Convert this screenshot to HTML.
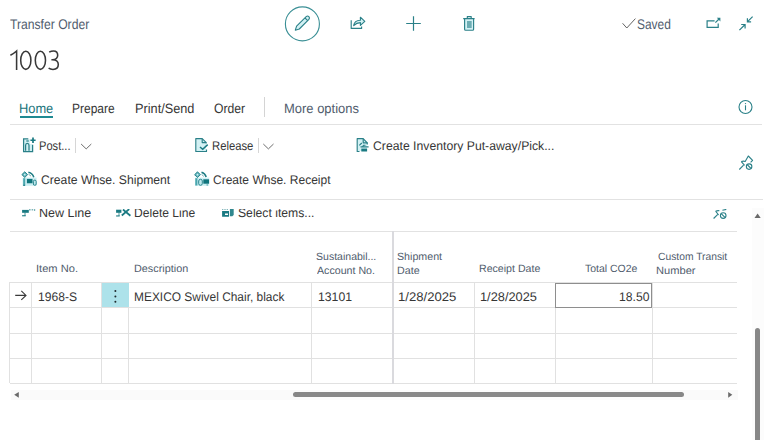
<!DOCTYPE html>
<html><head><meta charset="utf-8">
<style>
*{box-sizing:border-box;margin:0;padding:0}
html,body{width:780px;height:440px;overflow:hidden;background:#fff}
body{font-family:"Liberation Sans",sans-serif;color:#212121;position:relative}
.a{position:absolute;white-space:nowrap;line-height:1;transform-origin:0 0;text-rendering:geometricPrecision}
svg{position:absolute;overflow:visible}
.hl{position:absolute;height:1px;background:#e1e1e1}
.vl{position:absolute;width:1px;background:#e1e1e1}
</style></head><body>

<div class="a" style="left:10.0px;top:17px;font-size:14px;color:#505c6d;transform:scaleX(0.868)">Transfer Order</div>
<div class="a" style="left:636.95px;top:17px;font-size:14px;color:#505c6d;transform:scaleX(0.853)">Saved</div>
<div class="a" style="left:18.75px;top:102px;font-size:13.5px;color:#20747b;transform:scaleX(0.951)">Home</div>
<div class="a" style="left:72.31px;top:102px;font-size:13.5px;color:#363636;transform:scaleX(0.889)">Prepare</div>
<div class="a" style="left:134.56px;top:102px;font-size:13.5px;color:#363636;transform:scaleX(0.943)">Print/Send</div>
<div class="a" style="left:213.5px;top:102px;font-size:13.5px;color:#363636;transform:scaleX(0.903)">Order</div>
<div class="a" style="left:283.64px;top:102px;font-size:13.5px;color:#505c6d;transform:scaleX(0.96)">More options</div>
<div class="a" style="left:39.11px;top:140px;font-size:12.5px;color:#363636;transform:scaleX(0.888)">Post...</div>
<div class="a" style="left:211.5px;top:140px;font-size:12.5px;color:#363636;transform:scaleX(0.902)">Release</div>
<div class="a" style="left:372.9px;top:140px;font-size:12.5px;color:#363636;transform:scaleX(0.978)">Create Inventory Put-away/Pick...</div>
<div class="a" style="left:40.5px;top:174px;font-size:12.5px;color:#363636;transform:scaleX(0.974)">Create Whse. Shipment</div>
<div class="a" style="left:212.7px;top:174px;font-size:12.5px;color:#363636;transform:scaleX(0.961)">Create Whse. Receipt</div>
<div class="a" style="left:35.84px;top:264px;font-size:10.5px;color:#505c6d;transform:scaleX(1.058)">Item No.</div>
<div class="a" style="left:133.57px;top:264px;font-size:10.5px;color:#505c6d;transform:scaleX(1.033)">Description</div>
<div class="a" style="left:316.2px;top:252px;font-size:10.5px;color:#505c6d;transform:scaleX(1.003)">Sustainabil...</div>
<div class="a" style="left:317.2px;top:266px;font-size:10.5px;color:#505c6d;transform:scaleX(1.014)">Account No.</div>
<div class="a" style="left:397.48px;top:252px;font-size:10.5px;color:#505c6d;transform:scaleX(1.016)">Shipment</div>
<div class="a" style="left:397.48px;top:266px;font-size:10.5px;color:#505c6d;transform:scaleX(1.019)">Date</div>
<div class="a" style="left:478.59px;top:264px;font-size:10.5px;color:#505c6d;transform:scaleX(1.01)">Receipt Date</div>
<div class="a" style="left:585.4px;top:264px;font-size:10.5px;color:#505c6d;transform:scaleX(0.998)">Total CO2e</div>
<div class="a" style="left:657.5px;top:252px;font-size:10.5px;color:#505c6d;transform:scaleX(0.98)">Custom Transit</div>
<div class="a" style="left:656.44px;top:266px;font-size:10.5px;color:#505c6d;transform:scaleX(1.058)">Number</div>
<div class="a" style="left:37.53px;top:291px;font-size:12.5px;color:#363636;transform:scaleX(0.967)">1968-S</div>
<div class="a" style="left:134.15px;top:291px;font-size:12.5px;color:#363636;transform:scaleX(0.954)">MEXICO Swivel Chair, black</div>
<div class="a" style="left:317.52px;top:291px;font-size:12.5px;color:#363636;transform:scaleX(0.979)">13101</div>
<div class="a" style="left:398.15px;top:291px;font-size:12.5px;color:#363636;transform:scaleX(1.048)">1/28/2025</div>
<div class="a" style="left:479.98px;top:291px;font-size:12.5px;color:#363636;transform:scaleX(1.024)">1/28/2025</div>
<div class="a" style="left:618.83px;top:291px;font-size:12.5px;color:#363636;transform:scaleX(0.973)">18.50</div>

<!-- title number (light weight) -->
<svg style="left:0;top:0" width="80" height="80">
  <g fill="none" stroke="#383838" stroke-width="1.55" stroke-linecap="butt">
    <path d="M10.4 55.2 Q14 53.4 16.6 51 V70"/>
    <ellipse cx="25.8" cy="60.25" rx="5.1" ry="9.1"/>
    <ellipse cx="40.4" cy="60.25" rx="5.1" ry="9.1"/>
    <path d="M49.2 52.2 Q51.2 50.9 53.6 50.9 Q57.7 50.9 57.7 55.3 Q57.7 59.6 52.4 59.8 H51.4 M52.4 59.8 Q58.3 59.8 58.3 64.6 Q58.3 69.4 53 69.4 Q50.4 69.4 48.6 68.2"/>
  </g>
</svg>

<!-- top toolbar -->
<svg style="left:0;top:0" width="780" height="46">
  <circle cx="302.4" cy="23.9" r="17" fill="none" stroke="#3a8f95" stroke-width="1.1"/>
  <g fill="none" stroke="#2a8088" stroke-width="1.1" stroke-linejoin="round">
    <path d="M295.3 30.2 L296.6 26.2 L306.2 16.6 Q307.6 15.4 308.9 16.7 Q310.1 18 308.9 19.4 L299.3 29 Z" fill="#d3f1f4"/>
    <path d="M304.9 17.9 L307.7 20.6"/>
  </g>
  <!-- share -->
  <g fill="none" stroke="#2a8088" stroke-width="1.15" stroke-linejoin="round">
    <path d="M351.2 20.2 V28.4 H361.6 V26.6"/>
    <path d="M353.7 25.6 Q354.3 20.4 360.4 20.2 V17.2 L364.8 21.3 L360.4 25.4 V22.6 Q356.6 22.6 353.7 25.6 Z" fill="#d3f1f4"/>
  </g>
  <!-- plus -->
  <path d="M413.5 16.2 V30.8 M406.2 23.5 H420.8" stroke="#2a8088" stroke-width="1.2" fill="none"/>
  <!-- trash -->
  <rect x="465" y="19" width="8.2" height="10.9" rx="0.8" fill="#d3f1f4"/>
  <g fill="none" stroke="#2a8088" stroke-width="1.15" stroke-linejoin="round">
    <path d="M463.2 18.6 H474.6 M467.3 18.4 V16.6 H471.2 V18.4"/>
    <path d="M464.6 18.8 V29.2 Q464.6 30.2 465.6 30.2 H472.6 Q473.6 30.2 473.6 29.2 V18.8"/>
  </g>
  <rect x="467" y="21" width="4.7" height="7" fill="#2a8088" opacity="0.6"/>
  <!-- check -->
  <path d="M622.6 23.3 L626.8 28 L635.4 18.6" fill="none" stroke="#5a5a5a" stroke-width="0.95"/>
  <!-- open new -->
  <g fill="none" stroke="#2a8088" stroke-width="1.2">
    <path d="M714.6 20.9 H707.1 V27.4 H718.2 V23.5"/>
    <path d="M715.4 22.6 L719 19"/>
  </g>
  <path d="M716.8 17.8 H720.4 V21.4 Z" fill="#2a8088"/>
  <!-- collapse -->
  <g fill="none" stroke="#2a8088" stroke-width="1.2">
    <path d="M752.6 16.6 L747.6 21.6 M747.4 18.2 V21.9 H751.1"/>
    <path d="M739.4 30.2 L744.6 25 M741.2 24.5 H745.1 V28.4"/>
  </g>
</svg>

<!-- tabs -->
<div style="position:absolute;left:19.6px;top:115.8px;width:33.4px;height:1.8px;background:#1f8a92"></div>
<div class="vl" style="left:264px;top:97px;height:20px;background:#d4d4d4"></div>
<svg style="left:0;top:0" width="780" height="130">
  <circle cx="745.5" cy="107" r="6.5" fill="none" stroke="#2a8088" stroke-width="1.1"/>
  <path d="M745.5 105.3 V110.3" stroke="#2a8088" stroke-width="1.1"/>
  <circle cx="745.5" cy="103.6" r="0.7" fill="#2a8088"/>
</svg>
<div class="hl" style="left:10px;top:123.6px;width:752px;background:#e2e2e2"></div>

<!-- actions -->
<svg style="left:0;top:0" width="780" height="200">
  <!-- post icon -->
  <path d="M24 139.2 H30 V144 H32.2 V151.1 H24 Z" fill="#d3f1f4"/>
  <g fill="none" stroke="#2a8088" stroke-width="1.25">
    <path d="M28.3 138.8 H23.6 V151.5 H32.6 V144.8"/>
    <path d="M25.6 150.8 V145.3 Q25.6 143.4 27.3 143.4 Q29 143.4 29 145.3 V150.8"/>
    <path d="M26.3 141 H28.8"/>
  </g>
  <path d="M33 137.6 V142.9 M30.4 140.25 H35.6" stroke="#1a7a82" stroke-width="1.7" fill="none"/>
  <!-- release icon -->
  <path d="M196.2 139 H202 L206 143 V151.1 H196.2 Z" fill="#d3f1f4"/>
  <g fill="none" stroke="#2a8088" stroke-width="1.15" stroke-linejoin="round">
    <path d="M206.5 149.5 V151.5 H195.8 V138.6 H202.2 L206.3 142.7 V143.4"/>
    <path d="M202.2 138.8 V142.6 H206"/>
  </g>
  <path d="M200 147 L202.7 149.3 L207.7 144.6" fill="none" stroke="#1a7a82" stroke-width="1.5"/>
  <!-- inventory icon -->
  <path d="M357.6 139 H363 L367 143 V151.1 H357.6 Z" fill="#d3f1f4"/>
  <g fill="none" stroke="#2a8088" stroke-width="1.15" stroke-linejoin="round">
    <path d="M367.3 143 L363.2 138.6 H357.2 V151.5 H359.5"/>
    <path d="M363.2 138.8 V142.8 H367.3 V144.5"/>
    <path d="M359.3 145.4 L361.8 143 M360.5 146.8 H368.6 M362.5 146.8 L363.5 145.2 H365.5"/>
  </g>
  <rect x="361.3" y="148.6" width="5.8" height="2.9" fill="#1a7a82"/>
  <!-- chevrons -->
  <path d="M81.1 144 L86.2 148.9 L91.3 144" fill="none" stroke="#666" stroke-width="0.95"/>
  <path d="M263.3 144 L268.4 148.9 L273.5 144" fill="none" stroke="#666" stroke-width="0.95"/>
  <!-- whse shipment icon -->
  <g id="whs">
    <rect x="22.6" y="177.6" width="14" height="8.2" fill="#cdeff3"/>
    <path d="M24.75 171.8 L27.6 174.6 L24.75 177.5 L21.9 174.6 Z" fill="#5fb3ba" stroke="#1a7a82" stroke-width="0.9"/>
    <circle cx="24.75" cy="174.6" r="0.9" fill="#cdeff3"/>
    <path d="M28.4 172.2 Q32.6 173.2 33.8 177.2" fill="none" stroke="#1a7a82" stroke-width="1.5"/>
    <path d="M28.6 174.2 L31 176.2" fill="none" stroke="#1a7a82" stroke-width="0.9" opacity="0.7"/>
    <rect x="23.2" y="178.2" width="2" height="7.3" fill="#4aa6ad"/>
    <rect x="26.9" y="178.9" width="5.6" height="4.35" fill="#0f747c"/>
    <rect x="33.4" y="180.1" width="2.8" height="5.2" rx="1.3" fill="#bfe8ed" stroke="#1a7a82" stroke-width="0.9"/>
    <rect x="23.2" y="184.8" width="1.9" height="1" fill="#1a7a82"/>
  </g>
  <!-- whse receipt icon -->
  <g>
    <rect x="195" y="177.6" width="14.2" height="8.2" fill="#cdeff3"/>
    <path d="M197.5 171.8 L200.4 174.7 L197.5 177.6 L194.6 174.7 Z" fill="#5fb3ba" stroke="#1a7a82" stroke-width="0.9"/>
    <circle cx="197.5" cy="174.7" r="0.9" fill="#cdeff3"/>
    <path d="M201.5 172.2 Q205.2 173.4 206.2 177" fill="none" stroke="#1a7a82" stroke-width="1.5"/>
    <path d="M201.6 174.4 L203.8 176.4" fill="none" stroke="#1a7a82" stroke-width="0.9" opacity="0.7"/>
    <rect x="195.3" y="178.2" width="2.1" height="7.3" fill="#4aa6ad"/>
    <rect x="198.7" y="179.3" width="3.6" height="6" rx="1.7" fill="#bfe8ed" stroke="#1a7a82" stroke-width="0.9"/>
    <rect x="203.3" y="179.3" width="5.8" height="4.4" fill="#0f747c"/>
    <rect x="206.6" y="184.2" width="1.2" height="1.5" fill="#1a7a82" opacity="0.6"/>
  </g>
  <!-- pin -->
  <g fill="none" stroke="#2a8088" stroke-width="1.1" stroke-linejoin="round">
    <path d="M739.3 169.5 L743.6 165.2"/>
    <path d="M741.3 161.6 Q743.3 160.8 745.2 161.4 L748.3 156 L752.6 160.4 L750.6 162.4"/>
    <path d="M741.3 161.6 L744.6 165.4"/>
    <circle cx="749.1" cy="166.6" r="2.75"/>
    <path d="M747.2 164.7 L751 168.5"/>
  </g>
</svg>
<div class="vl" style="left:75.3px;top:137.5px;height:15px;background:#d6d6d6"></div>
<div class="vl" style="left:258.3px;top:137.5px;height:15px;background:#d6d6d6"></div>
<div class="hl" style="left:10px;top:199px;width:753px;background:#e2e2e2"></div>

<!-- clipped lines toolbar -->
<div style="position:absolute;left:0;top:209px;width:780px;height:14px;overflow:hidden">
<div class="a" style="left:39.0px;top:-2px;font-size:12.5px;color:#363636;transform:scaleX(1.0)">New Line</div>
<div class="a" style="left:134.33px;top:-2px;font-size:12.5px;color:#363636;transform:scaleX(0.968)">Delete Line</div>
<div class="a" style="left:238.03px;top:-2px;font-size:12.5px;color:#363636;transform:scaleX(0.974)">Select items...</div>
  <svg style="left:0;top:0" width="780" height="14">
    <g transform="translate(0,-209)" fill="#1a7a82">
      <rect x="22.1" y="209.9" width="6.7" height="2.9"/>
      <rect x="24.3" y="212.6" width="1.4" height="3.2" opacity="0.55"/>
      <rect x="22.1" y="215.2" width="3.6" height="1.1"/>
      <rect x="29" y="209.2" width="1.6" height="1.2" opacity="0.7"/>
      <rect x="31.6" y="209.2" width="1.6" height="1.2" opacity="0.7"/>
      <rect x="34" y="209.2" width="1.2" height="1.6" opacity="0.7"/>
      <rect x="116.1" y="209.7" width="5.3" height="3.1"/>
      <rect x="118.3" y="212.6" width="1.4" height="3.4" opacity="0.55"/>
      <rect x="116.1" y="215.4" width="3.6" height="1.1"/>
      <path d="M121.8 215.5 L129.2 209.1 M123 209.5 L130.4 215.7" stroke="#1a7a82" stroke-width="1.8" fill="none"/>
      <path d="M222.1 211 H229 V216.7 H222.1 Z M225 213.4 V215 H228 V213.4 Z" fill-rule="evenodd"/>
      <path d="M229.9 209.1 H233.7 V215 L232.3 216.3 H229.9 Z" opacity="0.9"/>
      <rect x="222.1" y="209" width="1.2" height="1" opacity="0.6"/>
      <rect x="224.4" y="209" width="1.2" height="1" opacity="0.6"/>
      <rect x="226.7" y="209" width="1.2" height="1" opacity="0.6"/>
    </g>
    <g transform="translate(0,-209)" fill="none" stroke="#2a8088" stroke-width="1.1">
      <path d="M713.6 218.5 L717.8 214.3"/>
      <path d="M715.6 211.2 Q717.6 210.4 719.4 210.8 M715.6 211.2 L718.6 215"/>
      <circle cx="723.2" cy="215.6" r="2.8"/>
      <path d="M721.2 213.6 L725.2 217.6 M722.4 210.2 L726.3 209.4"/>
    </g>
  </svg>
</div>
<div class="hl" style="left:10px;top:231px;width:727px;background:#e2e2e2"></div>

<!-- vertical scrollbar -->
<div style="position:absolute;left:752px;top:208px;width:11.5px;height:232px;background:#fcfcfc"></div>
<svg style="left:0;top:0" width="780" height="440">
  <path d="M754.5 218 L757.6 213.6 L760.7 218 Z" fill="#6a6a6a"/>
</svg>
<div style="position:absolute;left:754.9px;top:327.6px;width:5px;height:120px;border-radius:2.5px;background:#878787"></div>

<!-- grid -->
<div class="hl" style="left:9.5px;top:282.3px;width:727.5px"></div>
<div class="hl" style="left:9.5px;top:307.2px;width:727.5px"></div>
<div class="hl" style="left:9.5px;top:333px;width:727.5px"></div>
<div class="hl" style="left:9.5px;top:357.6px;width:727.5px"></div>
<div class="hl" style="left:9.5px;top:382.9px;width:727.5px"></div>
<div class="vl" style="left:9.4px;top:282.3px;height:101px"></div>
<div class="vl" style="left:31px;top:282.3px;height:101px"></div>
<div class="vl" style="left:101.3px;top:282.3px;height:101px"></div>
<div class="vl" style="left:128.3px;top:282.3px;height:101px"></div>
<div class="vl" style="left:311.3px;top:282.3px;height:101px"></div>
<div style="position:absolute;left:392px;top:231px;width:1.5px;height:152.9px;background:#dadade"></div>
<div class="vl" style="left:474px;top:282.3px;height:101px"></div>
<div class="vl" style="left:555.3px;top:282.3px;height:101px"></div>
<div class="vl" style="left:651.5px;top:282.3px;height:101px"></div>

<!-- row 1 -->
<div style="position:absolute;left:101.8px;top:282.8px;width:26.8px;height:24.5px;background:#ade2ea"></div>
<svg style="left:0;top:0" width="780" height="440">
  <path d="M15.2 295.4 H26.1 M21.3 290.9 L26 295.4 L21.3 299.9" fill="none" stroke="#3a3a3a" stroke-width="1.1"/>
  <circle cx="115.4" cy="290.9" r="1" fill="#1e2a2c"/>
  <circle cx="115.4" cy="296.4" r="1" fill="#1e2a2c"/>
  <circle cx="115.4" cy="301.8" r="1" fill="#1e2a2c"/>
</svg>
<div style="position:absolute;left:555.2px;top:282.6px;width:96.6px;height:25px;border:1px solid #8e8e8e"></div>

<!-- h scrollbar -->
<div style="position:absolute;left:11px;top:390px;width:726.5px;height:10px;background:#fafafa"></div>
<svg style="left:0;top:0" width="780" height="440">
  <path d="M14.2 394.8 L18.8 392 V397.7 Z" fill="#6a6a6a"/>
  <path d="M732.3 394.8 L728.2 392 V397.7 Z" fill="#6a6a6a"/>
</svg>
<div style="position:absolute;left:293.4px;top:391.9px;width:390.7px;height:5.1px;border-radius:2.5px;background:#878787"></div>

</body></html>
